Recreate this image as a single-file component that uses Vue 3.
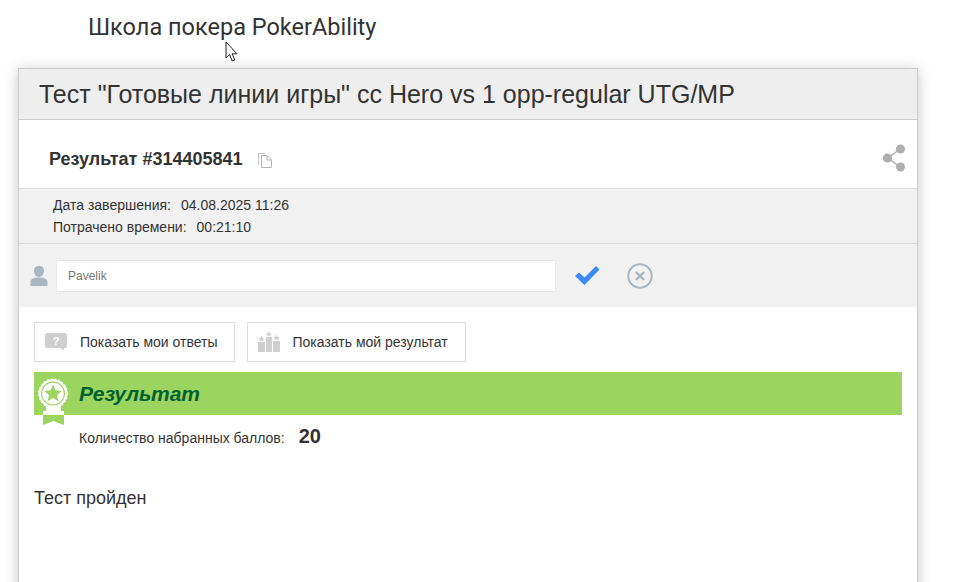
<template>
  <div class="page">
    <div class="school">Школа покера PokerAbility</div>
    <svg class="cursor" width="14" height="22" viewBox="0 0 14 22">
      <path d="M1 1 V17 L4.6 13.6 L7.2 20 L9.8 19 L7.2 12.8 H12 Z" fill="#fff" stroke="#222" stroke-width="1" />
    </svg>

    <div class="card">
      <div class="card-head">Тест "Готовые линии игры" сс Hero vs 1 opp-regular UTG/MP</div>

      <div class="result-row">
        <span class="result-id">Результат #314405841</span>
        <svg class="copy-icon" width="14" height="15" viewBox="0 0 14 15">
          <path d="M0.5 12.5 V0.5 H7" fill="none" stroke="#c4c4c4" stroke-width="1" />
          <path d="M3.5 2.5 H9 L13.5 7 V14.5 H3.5 Z" fill="#fff" stroke="#b4b4b4" stroke-width="1" />
          <path d="M9 2.5 V7 H13.5" fill="none" stroke="#b4b4b4" stroke-width="1" />
        </svg>
        <svg class="share-icon" width="24" height="28" viewBox="0 0 24 28">
          <path d="M18 5 L6 14 L18 23" fill="none" stroke="#aeaeae" stroke-width="1.5" />
          <circle cx="18.5" cy="5" r="4.5" fill="#aeaeae" />
          <circle cx="5.5" cy="14" r="4.6" fill="#aeaeae" />
          <circle cx="18.5" cy="23" r="4.5" fill="#aeaeae" />
        </svg>
      </div>

      <div class="info-row">
        <div>Дата завершения:<span class="val">04.08.2025 11:26</span></div>
        <div>Потрачено времени:<span class="val">00:21:10</span></div>
      </div>

      <div class="name-row">
        <svg class="user-icon" width="18" height="22" viewBox="0 0 18 21">
          <ellipse cx="9" cy="5.8" rx="5" ry="5.6" fill="#a9b5bf" />
          <path d="M0.5 20.5 V16.5 C0.5 13.5 4 12.6 6 12 H12 C14 12.6 17.5 13.5 17.5 16.5 V20.5 Z" fill="#a9b5bf" />
        </svg>
        <input class="name-input" type="text" value="Pavelik" />
        <svg class="check-icon" width="26" height="21" viewBox="0 0 26 21">
          <path d="M1 11 L5 7.5 L10.5 12.5 L22 1 L25.5 4.5 L10.5 20 Z" fill="#3b8af5" />
        </svg>
        <svg class="cancel-icon" width="26" height="26" viewBox="0 0 26 26">
          <circle cx="13" cy="13" r="11.7" fill="none" stroke="#a9b5bf" stroke-width="2" />
          <path d="M9 9 L17 17 M17 9 L9 17" stroke="#a9b5bf" stroke-width="2.4" />
        </svg>
      </div>

      <div class="content">
        <div class="buttons">
          <button class="btn">
            <svg width="24" height="20" viewBox="0 0 24 20">
              <path d="M3 1 H21 Q23 1 23 3 V14 Q23 16 21 16 H20 L19.5 18.5 L16 16 H3 Q1 16 1 14 V3 Q1 1 3 1 Z" fill="#cfcfcf" />
              <text x="12" y="12.5" class="q-mark">?</text>
            </svg>
            Показать мои ответы
          </button>
          <button class="btn">
            <svg width="24" height="22" viewBox="0 0 24 22">
              <rect x="1" y="11" width="7" height="10" fill="#cfcfcf" />
              <rect x="9" y="6" width="6" height="15" fill="#cfcfcf" />
              <rect x="16" y="10" width="7" height="11" fill="#cfcfcf" />
              <path d="M4.5 4.5 L5.6 7 L8 7.2 L6 8.6 L6.8 10.5 L4.5 9.4 L2.2 10.5 L3 8.6 L1 7.2 L3.4 7 Z" fill="#cfcfcf" />
              <path d="M12 0 L13.1 2.4 L15.5 2.6 L13.6 4 L14.3 5.6 L12 4.6 L9.7 5.6 L10.4 4 L8.5 2.6 L10.9 2.4 Z" fill="#cfcfcf" />
              <path d="M19.5 3.5 L20.6 6 L23 6.2 L21 7.6 L21.8 9.5 L19.5 8.4 L17.2 9.5 L18 7.6 L16 6.2 L18.4 6 Z" fill="#cfcfcf" />
            </svg>
            Показать мой результат
          </button>
        </div>

        <div class="result-bar">
          <svg class="medal" width="32" height="47" viewBox="0 0 32 47">
            <path d="M6 37 H27 V47 L16.5 43 L6 47 Z" fill="#9bd45f" />
            <rect x="9" y="26" width="15" height="11" fill="#fff" />
            <path d="M6 33 H27 V37 H6 Z" fill="#fff" />
            <circle cx="16" cy="15.5" r="14.3" fill="#fff" stroke="#fff" stroke-width="1.4" stroke-dasharray="2 1.8" />
            <circle cx="16" cy="15.5" r="11.4" fill="#fff" stroke="#9bd45f" stroke-width="1.2" />
            <path d="M16 6.5 L18.5 12.3 L24.8 12.9 L20 17 L21.4 23.2 L16 20 L10.6 23.2 L12 17 L7.2 12.9 L13.5 12.3 Z" fill="#9bd45f" />
          </svg>
          <span class="bar-title">Результат</span>
        </div>

        <div class="score">
          <span>Количество набранных баллов:</span>
          <b>20</b>
        </div>

        <div class="passed">Тест пройден</div>
      </div>
    </div>
  </div>
</template>

<script setup>
</script>

<style>
html, body {
  background: #fff;
  overflow: hidden;
}
</style>

<style scoped>
.page {
  position: relative;
  height: 582px;
  overflow: hidden;
  font-family: "Liberation Sans", Arial, sans-serif;
  color: #333;
}

.school {
  padding: 13px 0 0 88px;
  height: 68px;
  box-sizing: border-box;
  font-family: Roboto, sans-serif;
  font-size: 23.5px;
  line-height: 28px;
}

.cursor {
  position: absolute;
  left: 225px;
  top: 41px;
}

.card {
  width: 900px;
  margin-left: 18px;
  height: 560px;
  box-sizing: border-box;
  border: 1px solid #ccc;
  background: #fff;
  box-shadow: 0 2px 14px rgba(0, 0, 0, 0.22);
}

.card-head {
  height: 51px;
  box-sizing: border-box;
  padding-left: 20px;
  background: #eee;
  border-bottom: 1px solid #ccc;
  font-size: 25px;
  line-height: 50px;
}

.result-row {
  display: flex;
  align-items: center;
  height: 69px;
  box-sizing: border-box;
  padding: 10px 0 0 30px;
  border-bottom: 1px solid #ddd;
}

.result-id {
  font-size: 18px;
  font-weight: bold;
}

.copy-icon {
  margin-left: 15px;
  margin-top: 3px;
}

.share-icon {
  margin-left: auto;
  margin-right: 11px;
  margin-top: -2px;
}

.info-row {
  height: 55px;
  box-sizing: border-box;
  padding: 5px 0 0 34px;
  background: #f1f1f1;
  border-bottom: 1px solid #ddd;
  font-size: 14px;
  line-height: 22px;
}

.val {
  margin-left: 10px;
}

.name-row {
  display: flex;
  align-items: center;
  height: 63px;
  padding-left: 11px;
  background: #f1f1f1;
}

.name-input {
  width: 500px;
  height: 32px;
  box-sizing: border-box;
  margin-left: 8px;
  padding: 0 11px;
  border: 1px solid #e6e6e6;
  border-radius: 2px;
  background: #fff;
  color: #777;
  font-family: "Liberation Sans", Arial, sans-serif;
  font-size: 12px;
}

.check-icon {
  margin-left: 18px;
}

.cancel-icon {
  margin-left: 27px;
}

.content {
  padding: 15px 15px 0;
}

.buttons {
  display: flex;
  gap: 12px;
}

.btn {
  display: flex;
  align-items: center;
  gap: 12px;
  height: 40px;
  padding: 0 16px 0 9px;
  border: 1px solid #ddd;
  background: #fff;
  color: #333;
  font-family: "Liberation Sans", Arial, sans-serif;
  font-size: 14px;
}

.btn + .btn {
  padding-right: 17px;
}

.q-mark {
  fill: #fff;
  font-size: 11px;
  font-weight: bold;
  text-anchor: middle;
}

.result-bar {
  position: relative;
  display: flex;
  align-items: center;
  height: 43px;
  margin-top: 10px;
  padding-left: 45px;
  background: #9bd45f;
}

.medal {
  position: absolute;
  left: 3px;
  top: 6px;
}

.bar-title {
  color: #006130;
  font-size: 21px;
  font-weight: bold;
  font-style: italic;
}

.score {
  display: flex;
  align-items: baseline;
  gap: 14px;
  margin-top: 10px;
  padding-left: 45px;
  font-size: 14px;
}

.score b {
  font-size: 20px;
}

.passed {
  margin-top: 40px;
  font-size: 18px;
}
</style>
